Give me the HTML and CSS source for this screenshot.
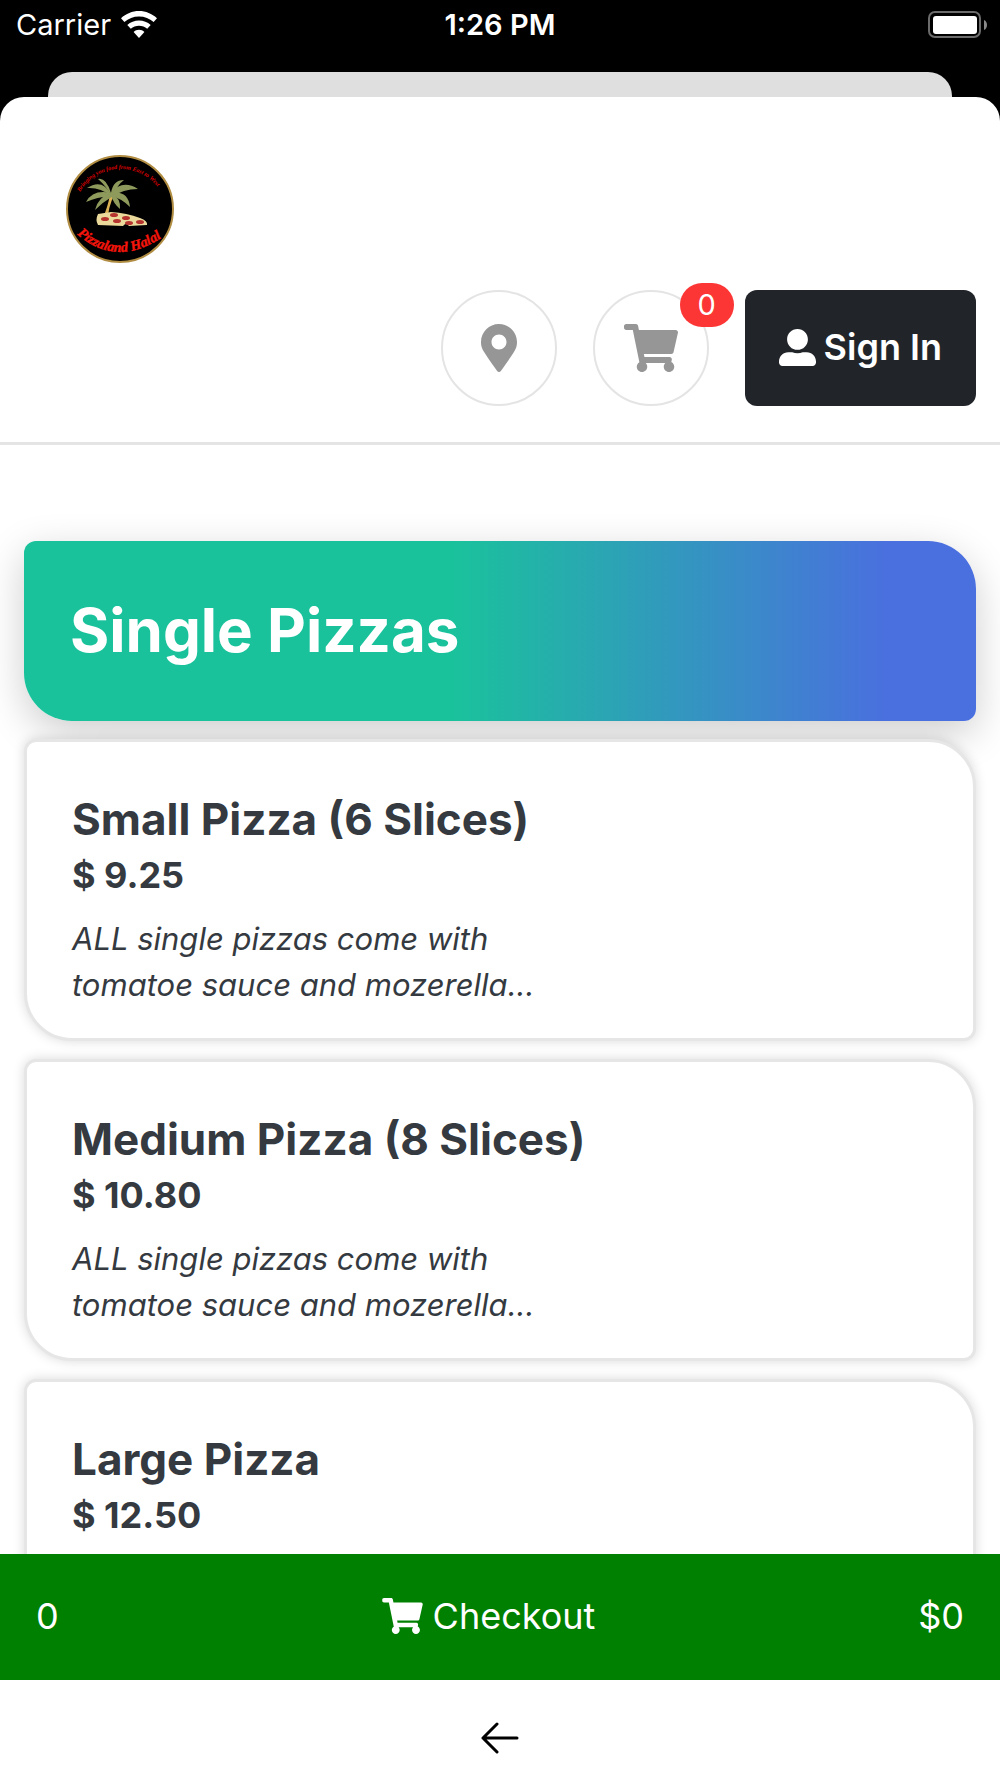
FILE: index.html
```html
<!DOCTYPE html>
<html lang="en">

<head>
  <meta charset="UTF-8">
  <meta name="viewport" content="width=device-width, initial-scale=1.0">
  <title>Pizzaland Halal</title>
  <link rel="stylesheet" href="styles.css">
</head>

<body>
  <!-- shared icons -->
  <svg class="sprite" aria-hidden="true">
    <symbol id="icon-cart" viewBox="0 0 576 512">
      <path d="M528.12 301.319l47.273-208C578.806 78.301 567.391 64 551.99 64H159.208l-9.166-44.81C147.758 8.021 137.93 0 126.529 0H24C10.745 0 0 10.745 0 24v16c0 13.255 10.745 24 24 24h69.883l70.248 343.435C147.325 417.1 136 435.222 136 456c0 30.928 25.072 56 56 56s56-25.072 56-56c0-15.674-6.447-29.835-16.824-40h209.647C430.447 426.165 424 440.326 424 456c0 30.928 25.072 56 56 56s56-25.072 56-56c0-22.172-12.888-41.332-31.579-50.405l5.517-24.276c3.413-15.018-8.002-29.319-23.403-29.319H218.117l-6.545-32h293.145c11.206 0 20.92-7.754 23.403-18.681z" />
    </symbol>
  </svg>

  <div class="app">
    <div class="status-bar">
      <div class="status-carrier">
        <span>Carrier</span>
        <svg class="wifi" viewBox="0 0 36 27">
          <path d="M18 0C24.800 0 31 2.700 36 7.200L32.600 11C28.600 7.500 23.600 5.500 18 5.500S7.400 7.500 3.400 11L0 7.200C5 2.700 11.200 0 18 0z" />
          <path d="M18 9.500C22.400 9.500 26.600 11.200 29.700 14L26.200 17.800C24 15.800 21.100 14.700 18 14.700S12 15.800 9.800 17.800L6.300 14C9.400 11.200 13.600 9.500 18 9.500z" />
          <path d="M18 18.800C20 18.800 22 19.600 23.400 21L18 27L12.600 21C14 19.600 16 18.800 18 18.800z" />
        </svg>
      </div>
      <div class="status-time">1:26 PM</div>
      <div class="status-battery">
        <svg class="battery" viewBox="0 0 60 28">
          <rect x="1" y="1" width="51" height="25" rx="6" fill="none" stroke="#6b6b6b" stroke-width="2" />
          <rect x="5" y="5" width="44" height="18" rx="3" fill="#fff" />
          <path d="M56 9C60 10.500 60 17.500 56 19z" fill="#8a8a8a" />
        </svg>
      </div>
    </div>
    <div class="sheet-behind"></div>

    <div class="sheet">
      <header class="header">
        <a class="logo" href="#" aria-label="Pizzaland Halal">
          <svg viewBox="0 0 192 157">
            <defs>
              <path id="arc-top" d="M51 59A47 47 0 0 1 134 63" />
              <path id="arc-bottom" d="M48 101Q88 137 138 101" />
            </defs>
            <circle cx="91" cy="76" r="53" fill="#000" stroke="#b08d42" stroke-width="2" />
            <text class="logo-slogan"><textPath href="#arc-top">Bringing you food from East to West</textPath></text>
            <path d="M81 61L85 62Q79 75 79 86L73 87Q79 74 81 61z" fill="#d9b054" />
            <g fill="#8d9a5b">
              <path d="M82 61Q73 45 58 55Q71 54 82 63z" />
              <path d="M82 60Q77 44 69 46Q77 53 82 62z" />
              <path d="M82 60Q84 47 95 47Q88 52 85 62z" />
              <path d="M82 60Q93 46 109 56Q94 56 83 64z" />
              <path d="M82 60Q99 57 101 74Q92 65 82 63z" />
              <path d="M82 60Q64 56 57 69Q71 63 83 64z" />
              <path d="M82 60Q69 64 66 77Q74 69 84 63z" />
              <path d="M82 60Q92 65 91 76Q84 70 82 62z" />
            </g>
            <path d="M69 81L82 79Q98 80 111 85Q119 88 118 92L100 93Q97 89 94 93L69 92Q66 87 69 81z" fill="#ead99b" />
            <g fill="#b5342f">
              <ellipse cx="76" cy="86" rx="4" ry="2" />
              <ellipse cx="85" cy="82" rx="4" ry="2" />
              <ellipse cx="88" cy="88" rx="4" ry="2" />
              <ellipse cx="97" cy="85" rx="4" ry="2" />
              <ellipse cx="100" cy="90" rx="4" ry="2" />
              <ellipse cx="111" cy="89" rx="4" ry="2" />
            </g>
            <text class="logo-name"><textPath href="#arc-bottom">Pizzaland Halal</textPath></text>
          </svg>
        </a>

        <div class="actions">
          <button class="circle-btn" type="button" aria-label="Location">
            <svg class="icon-pin" viewBox="0 0 384 512">
              <path d="M172.268 501.67C26.97 291.031 0 269.413 0 192 0 85.961 85.961 0 192 0s192 85.961 192 192c0 77.413-26.97 99.031-172.268 309.67-9.535 13.774-29.93 13.773-39.464 0zM192 272c44.183 0 80-35.817 80-80s-35.817-80-80-80-80 35.817-80 80 35.817 80 80 80z" />
            </svg>
          </button>
          <button class="circle-btn" type="button" aria-label="Cart">
            <svg class="icon-cart"><use href="#icon-cart" /></svg>
            <span class="badge">0</span>
          </button>
          <button class="sign-in" type="button">
            <svg class="icon-user" viewBox="0 0 512 512">
              <path d="M256 288c79.5 0 144-64.5 144-144S335.5 0 256 0 112 64.5 112 144s64.5 144 144 144zm128 32h-55.1c-22.2 10.2-46.9 16-72.9 16s-50.6-5.8-72.9-16H128C57.3 320 0 377.3 0 448v16c0 26.5 21.5 48 48 48h416c26.5 0 48-21.5 48-48v-16c0-70.7-57.3-128-128-128z" />
            </svg>
            <span>Sign In</span>
          </button>
        </div>
      </header>

      <main class="menu">
        <h1 class="category">Single Pizzas</h1>

        <div class="item">
          <h2>Small Pizza (6 Slices)</h2>
          <p class="price">$ 9.25</p>
          <p class="desc">ALL single pizzas come with tomatoe sauce and mozerella...</p>
        </div>

        <div class="item">
          <h2>Medium Pizza (8 Slices)</h2>
          <p class="price">$ 10.80</p>
          <p class="desc">ALL single pizzas come with tomatoe sauce and mozerella...</p>
        </div>

        <div class="item">
          <h2>Large Pizza</h2>
          <p class="price">$ 12.50</p>
        </div>
      </main>

      <a class="checkout" href="#">
        <span>0</span>
        <span class="checkout-label">
          <svg class="icon-cart"><use href="#icon-cart" /></svg>
          Checkout
        </span>
        <span>$0</span>
      </a>

      <nav class="bottom-nav">
        <button class="back" type="button" aria-label="Back">
          <svg viewBox="0 0 40 32">
            <path d="M37 16H3M17 2L3 16L17 30" />
          </svg>
        </button>
      </nav>
    </div>
  </div>
</body>

</html>
```

FILE: styles.css
```css
:root {
  --text-color: #343a40;
  --border-color: #e4e4e4;
  --icon-color: #969696;
}

* {
  box-sizing: border-box;
  padding: 0;
  margin: 0;
}

body {
  font-family: Inter, "Liberation Sans", sans-serif;
  color: var(--text-color);
  background-color: #000;
}

button {
  font: inherit;
  border: none;
  background: none;
}

a {
  color: inherit;
  text-decoration: none;
}

.sprite {
  position: absolute;
  width: 0;
  height: 0;
}

.app {
  display: flex;
  flex-direction: column;
  height: 100vh;
  overflow: hidden;
}

/* status bar */
.status-bar {
  display: grid;
  grid-template-columns: 1fr auto 1fr;
  align-items: center;
  height: 72px;
  padding: 0 12px 23px;
  font-size: 29px;
  color: #fff;
}

.status-carrier {
  display: flex;
  align-items: center;
  gap: 10px;
  padding-left: 4px;
}

.status-time {
  font-weight: 600;
}

.status-battery {
  display: flex;
  justify-content: flex-end;
}

.wifi {
  width: 36px;
  height: 27px;
  fill: #fff;
}

.battery {
  width: 60px;
  height: 28px;
}

.sheet-behind {
  height: 25px;
  margin: 0 48px;
  border-radius: 24px 24px 0 0;
  background-color: #dfdfdf;
}

.sheet {
  flex: 1;
  display: flex;
  flex-direction: column;
  min-height: 0;
  overflow: hidden;
  border-radius: 24px 24px 0 0;
  background-color: #fff;
}

/* header */
.header {
  padding: 36px 24px;
  border-bottom: 3px solid var(--border-color);
}

.logo {
  display: block;
  width: 192px;
  height: 157px;
  margin-left: 5px;
}

.logo svg {
  display: block;
  width: 100%;
  height: 100%;
}

.logo-slogan,
.logo-name {
  font-family: "Liberation Serif", serif;
  font-style: italic;
  font-weight: 700;
}

.logo-slogan {
  font-size: 6px;
  fill: #d00;
}

.logo-name {
  font-size: 14px;
  fill: #f5150c;
  stroke: #f5150c;
  stroke-width: .4;
}

.actions {
  display: flex;
  justify-content: flex-end;
  gap: 36px;
}

.circle-btn {
  position: relative;
  display: flex;
  align-items: center;
  justify-content: center;
  width: 116px;
  height: 116px;
  border: 2px solid var(--border-color);
  border-radius: 50%;
  fill: var(--icon-color);
}

.circle-btn svg {
  height: 48px;
}

.icon-pin {
  width: 36px;
}

.circle-btn .icon-cart {
  width: 54px;
}

.badge {
  position: absolute;
  top: -9px;
  right: -27px;
  width: 54px;
  height: 44px;
  line-height: 43px;
  font-size: 29px;
  text-align: center;
  color: #fff;
  border-radius: 22px;
  background-color: #fc3535;
}

.sign-in {
  display: flex;
  align-items: center;
  gap: 8px;
  height: 116px;
  padding: 0 34px 2px;
  font-size: 36px;
  font-weight: 600;
  color: #fff;
  fill: #fff;
  border-radius: 12px;
  background-color: #212529;
}

.icon-user {
  width: 37px;
  height: 37px;
}

/* menu */
.menu {
  flex: 1;
  display: flex;
  flex-direction: column;
  gap: 18px;
  min-height: 0;
  padding: 96px 24px 0;
  overflow: hidden;
}

.category,
.item {
  flex-shrink: 0;
  border-radius: 12px 48px 12px 48px;
}

.category {
  padding: 47px 46px 49px;
  line-height: 84px;
  font-size: 60px;
  color: #fff;
  background-image: linear-gradient(to right, #1ac29c 45%, #4a6fdf 91%);
  box-shadow: 0 12px 40px rgba(0, 0, 0, .2);
}

.item {
  min-height: 302px;
  padding: 49px 45px 30px;
  border: 3px solid #e6e6e6;
  background-color: #fff;
  box-shadow: 0 0 12px rgba(0, 0, 0, .15);
}

.item h2 {
  line-height: 56px;
  font-size: 44px;
}

.price {
  line-height: 56px;
  font-size: 36px;
  font-weight: 700;
}

.desc {
  max-width: 500px;
  margin-top: 13px;
  line-height: 46px;
  font-size: 31px;
  font-style: italic;
}

/* checkout bar */
.checkout {
  display: flex;
  align-items: center;
  justify-content: space-between;
  height: 126px;
  padding: 0 36px 2px;
  font-size: 36px;
  color: #fff;
  fill: #fff;
  background-color: #008000;
}

.checkout-label {
  display: flex;
  align-items: center;
  gap: 10px;
}

.checkout-label .icon-cart {
  width: 41px;
  height: 36px;
}

.bottom-nav {
  display: flex;
  justify-content: center;
  height: 98px;
  padding-top: 42px;
}

.back {
  width: 40px;
  height: 32px;
}

.back svg {
  display: block;
  fill: none;
  stroke: #000;
  stroke-width: 3;
  stroke-linecap: round;
  stroke-linejoin: round;
}
```
